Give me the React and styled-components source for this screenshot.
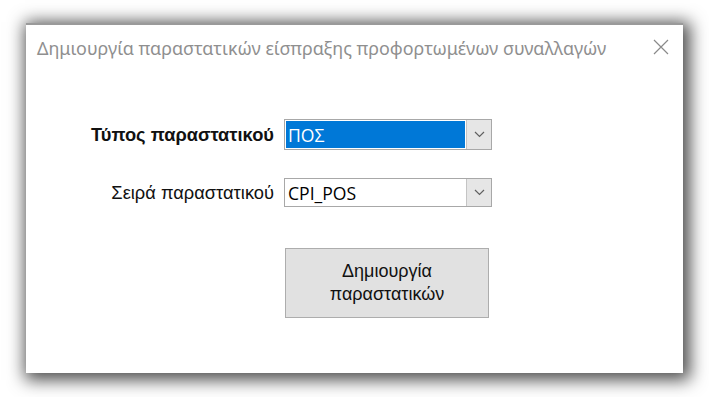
import React from 'react'
import styled, { createGlobalStyle } from 'styled-components'

const Global = createGlobalStyle`
  html, body {
    margin: 0;
    padding: 0;
    background: #ffffff;
  }
  body {
    width: 709px;
    height: 397px;
    overflow: hidden;
  }
`

const Page = styled.div`
  padding: 23px 0 0 26px;
`

const Window = styled.div`
  width: 657px;
  height: 350px;
  box-sizing: border-box;
  background: #ffffff;
  border-top: 2px solid #9a9a9a;
  box-shadow: 3px 3px 16px 4px rgba(0, 0, 0, 0.7);
  display: flex;
  flex-direction: column;
`

const TitleBar = styled.div`
  height: 48px;
  display: flex;
  align-items: center;
  justify-content: space-between;
  padding: 0 14px 0 11px;
`

const Title = styled.span`
  font-family: 'Noto Sans', 'Open Sans', sans-serif;
  font-size: 17.9px;
  color: #8f8f8f;
  white-space: nowrap;
  margin-top: -3px;
`

const Close = styled.svg`
  width: 16px;
  height: 16px;
  margin-top: -4px;
`

const Form = styled.div`
  display: grid;
  grid-template-columns: 248px 208px;
  column-gap: 10px;
  padding-top: 46px;
`

const Label = styled.div`
  grid-column: 1;
  font-family: 'Liberation Sans', Arial, sans-serif;
  font-size: 18.3px;
  font-weight: ${p => (p.$bold ? 700 : 400)};
  color: #111111;
  text-align: right;
  align-self: center;
  margin-top: ${p => p.$top || 0}px;
`

const Combo = styled.div`
  grid-column: 2;
  height: ${p => p.$h}px;
  margin-top: ${p => p.$top || 0}px;
  box-sizing: border-box;
  border: 1px solid #a8a8a8;
  background: #ffffff;
  display: flex;
  padding: 1px;
`

const Value = styled.div`
  flex: 1;
  display: flex;
  align-items: center;
  padding-left: 2px;
  font-family: 'Open Sans', 'Noto Sans', sans-serif;
  font-size: 17.6px;
  color: ${p => (p.$selected ? '#ffffff' : '#000000')};
  background: ${p => (p.$selected ? '#0078d7' : 'transparent')};
`

const Arrow = styled.div`
  width: 25px;
  box-sizing: border-box;
  border-left: 1px solid #c4c4c4;
  background: #e6e6e6;
  margin: -1px -1px -1px 1px;
  display: flex;
  align-items: center;
  justify-content: center;
`

const Button = styled.button`
  grid-column: 2;
  margin: 41px 0 0 1px;
  width: 204px;
  height: 70px;
  border: 1px solid #adadad;
  background: #e1e1e1;
  font-family: 'Liberation Sans', Arial, sans-serif;
  font-size: 18px;
  line-height: 23px;
  color: #111111;
  padding: 0;
`

const Chevron = () => (
  <svg width="11" height="7" viewBox="0 0 11 7">
    <path d="M1 1 L5.5 5.5 L10 1" fill="none" stroke="#606060" strokeWidth="1.2" />
  </svg>
)

export default function App() {
  return (
    <>
      <Global />
      <Page>
        <Window>
          <TitleBar>
            <Title>Δημιουργία παραστατικών είσπραξης προφορτωμένων συναλλαγών</Title>
            <Close viewBox="0 0 16 16">
              <path d="M1 1 L15 15 M15 1 L1 15" stroke="#8a8a8a" strokeWidth="1.2" />
            </Close>
          </TitleBar>
          <Form>
            <Label $bold>Τύπος παραστατικού</Label>
            <Combo $h={31}>
              <Value $selected>ΠΟΣ</Value>
              <Arrow><Chevron /></Arrow>
            </Combo>
            <Label $top={28}>Σειρά παραστατικού</Label>
            <Combo $h={29} $top={28}>
              <Value>CPI_POS</Value>
              <Arrow><Chevron /></Arrow>
            </Combo>
            <Button>Δημιουργία<br />παραστατικών</Button>
          </Form>
        </Window>
      </Page>
    </>
  )
}
